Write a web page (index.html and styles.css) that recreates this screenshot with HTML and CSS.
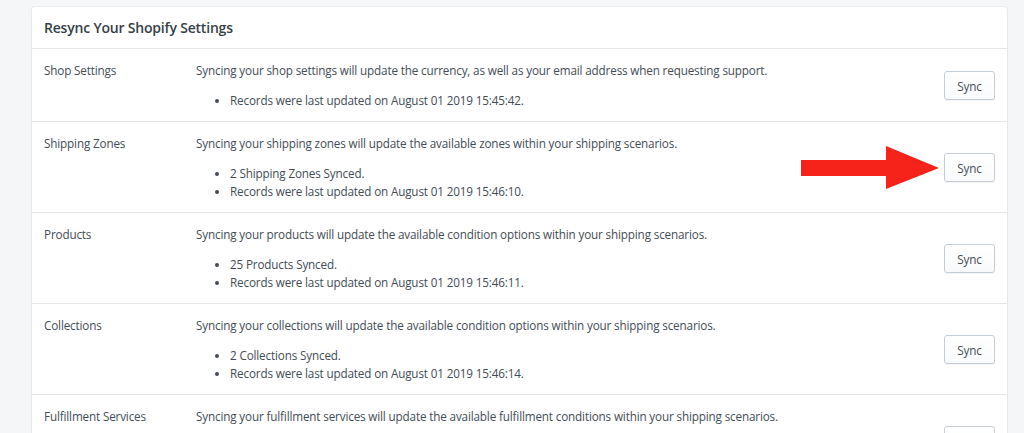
FILE: index.html
```html
<!DOCTYPE html>
<html>
<head>
<meta charset="utf-8">
<link rel="stylesheet" href="styles.css">
</head>
<body>
<div class="page">
  <div class="card">
    <div class="card-header">Resync Your Shopify Settings</div>
    <div class="row">
      <div class="label">Shop Settings</div>
      <div class="content">
        <p class="desc">Syncing your shop settings will update the currency, as well as your email address when requesting support.</p>
        <ul class="facts">
          <li>Records were last updated on August 01 2019 15:45:42.</li>
        </ul>
      </div>
      <div class="action"><button class="btn">Sync</button></div>
    </div>
    <div class="row">
      <div class="label">Shipping Zones</div>
      <div class="content">
        <p class="desc">Syncing your shipping zones will update the available zones within your shipping scenarios.</p>
        <ul class="facts">
          <li>2 Shipping Zones Synced.</li>
          <li>Records were last updated on August 01 2019 15:46:10.</li>
        </ul>
      </div>
      <div class="action">
        <svg class="arrow" width="140" height="44" viewBox="0 0 140 44"><polygon points="0,14 85,14 85,0 138,22 85,43 85,30 0,30" fill="#f5231a"/></svg>
        <button class="btn">Sync</button>
      </div>
    </div>
    <div class="row">
      <div class="label">Products</div>
      <div class="content">
        <p class="desc">Syncing your products will update the available condition options within your shipping scenarios.</p>
        <ul class="facts">
          <li>25 Products Synced.</li>
          <li>Records were last updated on August 01 2019 15:46:11.</li>
        </ul>
      </div>
      <div class="action"><button class="btn">Sync</button></div>
    </div>
    <div class="row">
      <div class="label">Collections</div>
      <div class="content">
        <p class="desc">Syncing your collections will update the available condition options within your shipping scenarios.</p>
        <ul class="facts">
          <li>2 Collections Synced.</li>
          <li>Records were last updated on August 01 2019 15:46:14.</li>
        </ul>
      </div>
      <div class="action"><button class="btn">Sync</button></div>
    </div>
    <div class="row">
      <div class="label">Fulfillment Services</div>
      <div class="content">
        <p class="desc">Syncing your fulfillment services will update the available fulfillment conditions within your shipping scenarios.</p>
        <ul class="facts">
          <li>1 Fulfillment Services Synced.</li>
          <li>Records were last updated on August 01 2019 15:46:15.</li>
        </ul>
      </div>
      <div class="action"><button class="btn">Sync</button></div>
    </div>
  </div>
</div>
</body>
</html>
```

FILE: styles.css
```css
html, body {
  margin: 0;
  padding: 0;
  background: #f4f6f8;
  font-family: "Open Sans", "Noto Sans", sans-serif;
  color: #434c55;
  font-size: 11.7px;
  letter-spacing: -0.15px;
}
.page {
  padding: 7px 17px 0 32px;
}
.card {
  background: #fff;
  border-radius: 3px;
  box-shadow: 0 0 0 1px rgba(63,63,68,0.04), 0 1px 2px rgba(63,63,68,0.12);
}
.card-header {
  height: 41px;
  line-height: 41px;
  padding: 0 12px;
  font-size: 14px;
  font-weight: 600;
  letter-spacing: -0.2px;
  color: #363f48;
  border-bottom: 1px solid #e4e6e8;
}
.row {
  display: flex;
  align-items: stretch;
  border-bottom: 1px solid #e3e5e7;
  padding: 13px 12px 12px 12px;
}
.label {
  width: 152px;
  flex: none;
  line-height: 16px;
}
.content {
  flex: 1;
  line-height: 16px;
}
.desc {
  margin: 0;
}
.facts {
  margin: 13px 0 0 0;
  padding-left: 34px;
  line-height: 18px;
}
.action {
  display: flex;
  align-items: center;
  position: relative;
}
.btn {
  width: 51px;
  height: 29px;
  background: linear-gradient(#fff, #f9fafb);
  border: 1px solid #c4cdd5;
  border-radius: 3px;
  box-shadow: 0 1px 0 rgba(22,29,37,0.05);
  font-family: inherit;
  font-size: 11.7px;
  letter-spacing: -0.15px;
  color: #434c55;
  padding: 0;
}
.arrow {
  position: absolute;
  right: 54px;
  top: 50%;
  margin-top: -22px;
}
```
